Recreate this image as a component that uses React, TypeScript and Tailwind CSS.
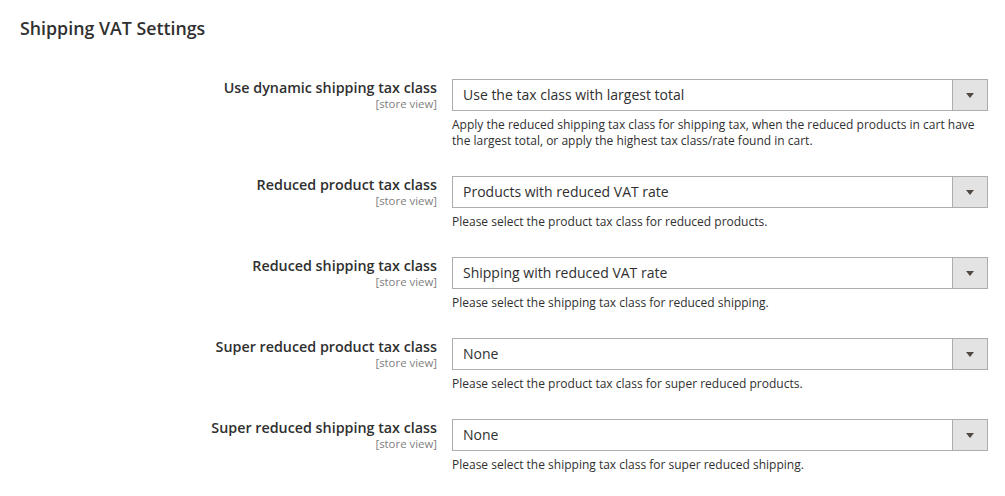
import React from 'react';

interface Row {
  label: string;
  value: string;
  note: string;
}

const rows: Row[] = [
  {
    label: 'Use dynamic shipping tax class',
    value: 'Use the tax class with largest total',
    note: 'Apply the reduced shipping tax class for shipping tax, when the reduced products in cart have the largest total, or apply the highest tax class/rate found in cart.',
  },
  {
    label: 'Reduced product tax class',
    value: 'Products with reduced VAT rate',
    note: 'Please select the product tax class for reduced products.',
  },
  {
    label: 'Reduced shipping tax class',
    value: 'Shipping with reduced VAT rate',
    note: 'Please select the shipping tax class for reduced shipping.',
  },
  {
    label: 'Super reduced product tax class',
    value: 'None',
    note: 'Please select the product tax class for super reduced products.',
  },
  {
    label: 'Super reduced shipping tax class',
    value: 'None',
    note: 'Please select the shipping tax class for super reduced shipping.',
  },
];

const FieldRow: React.FC<{ row: Row }> = ({ row }) => (
  <div className="flex mb-[27px]">
    <div className="w-[437px] shrink-0 text-right">
      <div className="text-[14.3px] leading-[18px] font-semibold text-[#303030]">{row.label}</div>
      <div className="text-[11.4px] leading-[14px] text-[#808080]">[store view]</div>
    </div>
    <div className="ml-[15px] w-[536px]">
      <div className="flex h-[32px] border border-[#adadad] bg-white">
        <div className="flex-1 pl-[10px] text-[14px] leading-[30px] text-[#303030]">{row.value}</div>
        <div className="flex w-[35px] items-center justify-center border-l border-[#adadad] bg-[#e3e3e3]">
          <svg width="8" height="5" viewBox="0 0 8 5">
            <path d="M0 0h8L4 5z" fill="#514943" />
          </svg>
        </div>
      </div>
      <p className="mt-[6px] text-[12px] leading-[16px] text-[#303030]">{row.note}</p>
    </div>
  </div>
);

export default function App() {
  return (
    <div
      className="h-[496px] w-[1005px] overflow-hidden bg-white"
      style={{ fontFamily: '"Open Sans", "Noto Sans", sans-serif' }}
    >
      <h2 className="pl-[20px] pt-[18px] text-[17.8px] leading-[20px] font-semibold text-[#303030]">
        Shipping VAT Settings
      </h2>
      <div className="mt-[41px]">
        {rows.map((r) => (
          <FieldRow key={r.label} row={r} />
        ))}
      </div>
    </div>
  );
}
